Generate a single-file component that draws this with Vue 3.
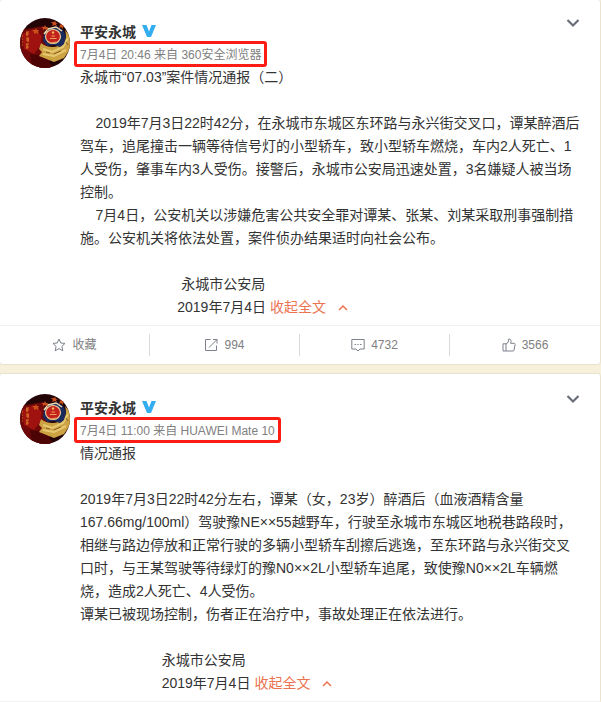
<template>
  <main class="feed">
    <article v-for="post in posts" :key="post.id" class="card">
      <div class="detail">
        <a class="avatar" href="#" aria-label="平安永城">
          <svg viewBox="0 0 50 50" width="50" height="50">
            <path d="M0 12L24 8L30 50H0z" fill="#6f0808" />
            <path d="M2 16L14 11L22 18L20 28L14 36L4 31z" fill="#a01210" />
            <path d="M10 36L24 38L34 50H12z" fill="#4c0404" />
            <path d="M21 25C27 30 38 31 44 24C47 20 46 16 45 12L50 18V31L44 40L34 44L24 40L19 38L22 34L19 31z" fill="#cda243" />
            <path d="M23 31L32 34L43 29L48 20M23 36L34 38L46 32" fill="none" stroke="#e6ca72" stroke-width="2" />
            <path d="M26 34L30 35M34 36L41 33M46 24L48 27" fill="none" stroke="#8a5f20" stroke-width="1" />
            <path d="M24 15L28 11L37 8L43 12L46 18L44 26L40 29L34 27L27 28L23 23z" fill="#1b2a5c" />
            <path d="M24 16L28 11L36 9L42 13" fill="none" stroke="#ead9ae" stroke-width="1.5" />
            <ellipse cx="33" cy="18.5" rx="7.5" ry="7" fill="#c4201c" stroke="#e9cc9b" stroke-width="1.2" />
            <path d="M30 20.5H36.5M31.5 18H35M27.5 23.5L31 25L36 24" stroke="#e8a15b" stroke-width="1.2" fill="none" />
            <circle cx="33" cy="14.5" r="1.2" fill="#f0bc60" />
            <g fill="#c9501b">
              <path d="M16 10l1 2h2l-1 2 1 2-3-1-2 1v-2l-2-2h3z" />
              <path d="M25 7l1 2h3l-2 1 1 3-3-2-2 1v-2l-2-1h3z" />
              <path d="M35 3l1 2h2l-2 1 1 3-2-2-3 1 1-2-2-2h3z" />
              <path d="M42 5l1 2 2 1-2 1v2l-2-2-2 1 1-3z" />
            </g>
            <path d="M6 14H9M6 16H9M7 14V18M6 20H9M6 22H9M8 20V24M6 26H9M6 29H9M7 26V31M2 18H3M2 21H3M2 24H3M2 27H3" fill="none" stroke="#d77928" stroke-width="1.2" />
          </svg>
        </a>

        <div class="content">
          <header class="head">
            <a class="name" href="#">平安永城
              <svg viewBox="0 0 14 12" width="14" height="12" aria-hidden="true">
                <path d="M0 0H4.5L7 6.5L9.5 0H14L9 12H5z" fill="#35adf1" />
              </svg>
            </a>
            <button class="more" type="button" aria-label="更多">
              <svg viewBox="0 0 14 10" width="14" height="10">
                <path d="M1.5 2L7 7.5L12.5 2" fill="none" stroke="#696e78" stroke-width="2.2" />
              </svg>
            </button>
          </header>
          <div class="meta">{{ post.time }} 来自 <a href="#">{{ post.source }}</a></div>
          <div class="text">
            <p v-for="(line, index) in post.lines" :key="index">{{ line }}</p>
            <div class="last">
              <span>{{ post.date }}</span>
              <button class="fold" type="button">
                收起全文
                <svg viewBox="0 0 10 7" width="10" height="7" aria-hidden="true">
                  <path d="M1 6L5 2L9 6" fill="none" stroke="#eb7350" stroke-width="1.5" />
                </svg>
              </button>
            </div>
          </div>
        </div>
      </div>

      <footer v-if="post.actions" class="actions">
        <button v-for="action in post.actions" :key="action.icon" type="button">
          <svg viewBox="0 0 14 14" width="14" height="14" aria-hidden="true">
            <path v-for="d in icons[action.icon]" :key="d" :d="d" />
          </svg>
          <span>{{ action.label }}</span>
        </button>
      </footer>
    </article>
  </main>
</template>

<script setup>
const icons = {
  star: ['M7 1L8.8 5L13 5.4L9.9 8.4L10.8 12.8L7 10.6L3.2 12.8L4.1 8.4L1 5.4L5.2 5z'],
  share: ['M6.5 1.5H1.5V12.5H12.5V7.5', 'M5 9.5L13 1.5', 'M9 1.5H13V5.5'],
  comment: ['M.8 1.5H13.2V11H9L7 13L5 11H.8z', 'M3.5 6.5H5M6.3 6.5H7.7M9 6.5H10.5'],
  like: ['M4 5.8H1V13H4z', 'M4 6L6.2 4.3L6.6 1.2C8.4.8 9.3 2 9 3.5L8.6 5.3H12.2C13 5.3 13.3 6 13.1 6.7L12 12.2C11.8 12.8 11.5 13 11 13H4'],
};

// spasi di awal baris ikut ditampilkan (white-space: pre-wrap)
const posts = [
  {
    id: 1,
    time: '7月4日 20:46',
    source: '360安全浏览器',
    lines: [
      '永城市“07.03”案件情况通报（二）',
      '',
      '    2019年7月3日22时42分，在永城市东城区东环路与永兴街交叉口，谭某醉酒后驾车，追尾撞击一辆等待信号灯的小型轿车，致小型轿车燃烧，车内2人死亡、1人受伤，肇事车内3人受伤。接警后，永城市公安局迅速处置，3名嫌疑人被当场控制。',
      '    7月4日，公安机关以涉嫌危害公共安全罪对谭某、张某、刘某采取刑事强制措施。公安机关将依法处置，案件侦办结果适时向社会公布。',
      '',
      ' '.repeat(26) + '永城市公安局',
    ],
    date: ' '.repeat(25) + '2019年7月4日',
    actions: [
      { icon: 'star', label: '收藏' },
      { icon: 'share', label: '994' },
      { icon: 'comment', label: '4732' },
      { icon: 'like', label: '3566' },
    ],
  },
  {
    id: 2,
    time: '7月4日 11:00',
    source: 'HUAWEI Mate 10',
    lines: [
      '情况通报',
      '',
      '2019年7月3日22时42分左右，谭某（女，23岁）醉酒后（血液酒精含量167.66mg/100ml）驾驶豫NE××55越野车，行驶至永城市东城区地税巷路段时，相继与路边停放和正常行驶的多辆小型轿车刮擦后逃逸，至东环路与永兴街交叉口时，与王某驾驶等待绿灯的豫N0××2L小型轿车追尾，致使豫N0××2L车辆燃烧，造成2人死亡、4人受伤。',
      '谭某已被现场控制，伤者正在治疗中，事故处理正在依法进行。',
      '',
      ' '.repeat(21) + '永城市公安局',
    ],
    date: ' '.repeat(21) + '2019年7月4日',
  },
];
</script>

<style>
body {
  background: #f7f0db;
}
</style>

<style scoped>
.feed {
  display: flex;
  flex-direction: column;
  gap: 10px;
  padding-right: 1px;
  font-family: "Liberation Sans", "Noto Sans CJK SC", sans-serif;
  font-size: 14px;
  color: #333;
}

.card {
  background: #fff;
  border-radius: 2px;
  box-shadow: 0 0 2px rgba(0, 0, 0, 0.2);
}

.detail {
  display: flex;
  gap: 10px;
  padding: 20px 20px 6px;
  border-bottom: 1px solid #f2f2f5;
}

.card:first-child .detail {
  padding-top: 18px;
}

.avatar {
  flex: none;
  width: 50px;
  height: 50px;
  border-radius: 50%;
  overflow: hidden;
  background: #240507;
}

.avatar svg {
  display: block;
}

.content {
  flex: 1;
  min-width: 0;
}

.head {
  display: flex;
  justify-content: space-between;
  align-items: flex-start;
  height: 28px;
}

.name {
  display: flex;
  align-items: center;
  gap: 6px;
  height: 26px;
  font-weight: bold;
  color: #333;
  text-decoration: none;
}

button {
  padding: 0;
  border: none;
  background: none;
  font: inherit;
  color: inherit;
  cursor: pointer;
}

.more {
  height: 10px;
}

.more svg {
  display: block;
}

.meta {
  position: relative;
  width: fit-content;
  margin-bottom: 2px;
  font-size: 12px;
  line-height: 18px;
  color: #808080;
}

.meta::after {
  content: "";
  position: absolute;
  inset: -5px -6px -3px;
  border: 3px solid #fb1d13;
  border-radius: 3px;
  pointer-events: none;
}

.meta a {
  color: inherit;
  text-decoration: none;
}

.text {
  line-height: 23px;
}

.text p {
  min-height: 23px;
  margin: 0;
  white-space: pre-wrap;
}

.last {
  display: flex;
  gap: 4px;
}

.last span {
  white-space: pre;
}

.fold {
  display: flex;
  align-items: center;
  gap: 12px;
  color: #eb7350;
}

.actions {
  display: grid;
  grid-template-columns: repeat(4, 1fr);
  padding: 8px 0;
}

.actions button {
  display: flex;
  justify-content: center;
  align-items: center;
  gap: 6px;
  height: 22px;
  border-right: 1px solid #d9d9d9;
  font-size: 12px;
  line-height: 18px;
  color: #808080;
}

.actions button:last-child {
  border-right: none;
}

.actions svg {
  fill: none;
  stroke: #7c818c;
  stroke-width: 1;
}
</style>
